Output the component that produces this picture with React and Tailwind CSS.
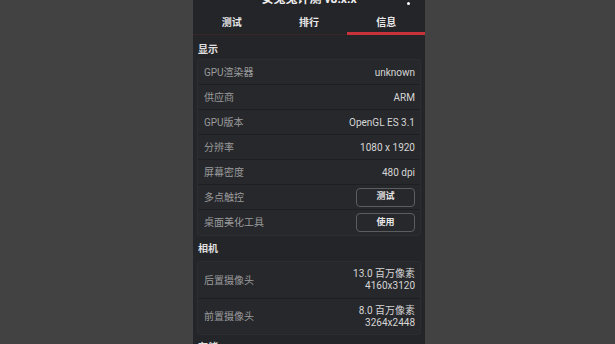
import React from "react";

const font = { fontFamily: 'Roboto, "Noto Sans CJK SC", sans-serif' };

function Row({ label, children, h = "h-[25px]", last }) {
  return (
    <div className={`flex items-center justify-between pl-[6px] pr-[5px] ${h} ${last ? "" : "border-b border-[#1e1f21]"}`}>
      <span className="text-[10px] text-[#9a9b9d]">{label}</span>
      {children}
    </div>
  );
}

function Val({ children }) {
  return <span className="text-[10px] text-[#d6d6d6]">{children}</span>;
}

function Btn({ children }) {
  return (
    <div className="w-[59px] h-[19px] rounded-[4px] border border-[#5c5d60] flex items-center justify-center text-[9px] font-bold text-[#e6e6e6]">
      {children}
    </div>
  );
}

export default function App() {
  return (
    <div className="w-[615px] h-[344px] bg-[#424242] overflow-hidden flex" style={font}>
      <div className="ml-[193px] w-[232px] h-full bg-[#242528] flex flex-col overflow-hidden">
        <div className="relative h-[10px] shrink-0">
          <div className="absolute left-0 right-0 -top-[8px] text-center text-[12px] font-bold text-[#eeeeee] leading-[14px]">
            安兔兔评测 v8.x.x
          </div>
          <div className="absolute left-[214px] top-[2px] w-[3px] h-[3px] rounded-full bg-white" />
        </div>
        <div className="relative h-[25px] shrink-0 flex border-b border-[#3a2528]">
          <div className="flex-1 flex items-center justify-center text-[10px] font-bold text-[#e8e8e8]">测试</div>
          <div className="flex-1 flex items-center justify-center text-[10px] font-bold text-[#e8e8e8]">排行</div>
          <div className="flex-1 flex items-center justify-center text-[10px] font-bold text-[#e8e8e8]">信息</div>
          <div className="absolute right-0 -bottom-[1px] w-[78px] h-[3px] bg-[#c8323a]" />
        </div>
        <div className="px-[4px] pt-[4px]">
          <div className="h-[20px] flex items-center text-[10px] font-bold text-[#e0e0e0] pl-[1px]">显示</div>
          <div className="bg-[#27282b] border border-[#2c2d30] rounded-[2px]">
            <Row label="GPU渲染器"><Val>unknown</Val></Row>
            <Row label="供应商"><Val>ARM</Val></Row>
            <Row label="GPU版本"><Val>OpenGL ES 3.1</Val></Row>
            <Row label="分辨率"><Val>1080 x 1920</Val></Row>
            <Row label="屏幕密度"><Val>480 dpi</Val></Row>
            <Row label="多点触控"><Btn>测试</Btn></Row>
            <Row label="桌面美化工具" last><Btn>使用</Btn></Row>
          </div>
          <div className="h-[25px] flex items-center text-[10px] font-bold text-[#e0e0e0] pl-[1px]">相机</div>
          <div className="bg-[#27282b] border border-[#2c2d30] rounded-[2px]">
            <Row label="后置摄像头" h="h-[37px]">
              <div className="text-right text-[10px] leading-[12px] text-[#d6d6d6]">
                <div>13.0 百万像素</div>
                <div>4160x3120</div>
              </div>
            </Row>
            <Row label="前置摄像头" h="h-[35px]" last>
              <div className="text-right text-[10px] leading-[12px] text-[#d6d6d6]">
                <div>8.0 百万像素</div>
                <div>3264x2448</div>
              </div>
            </Row>
          </div>
          <div className="h-[25px] flex items-center text-[10px] font-bold text-[#e0e0e0] pl-[1px]">存储</div>
        </div>
      </div>
    </div>
  );
}
